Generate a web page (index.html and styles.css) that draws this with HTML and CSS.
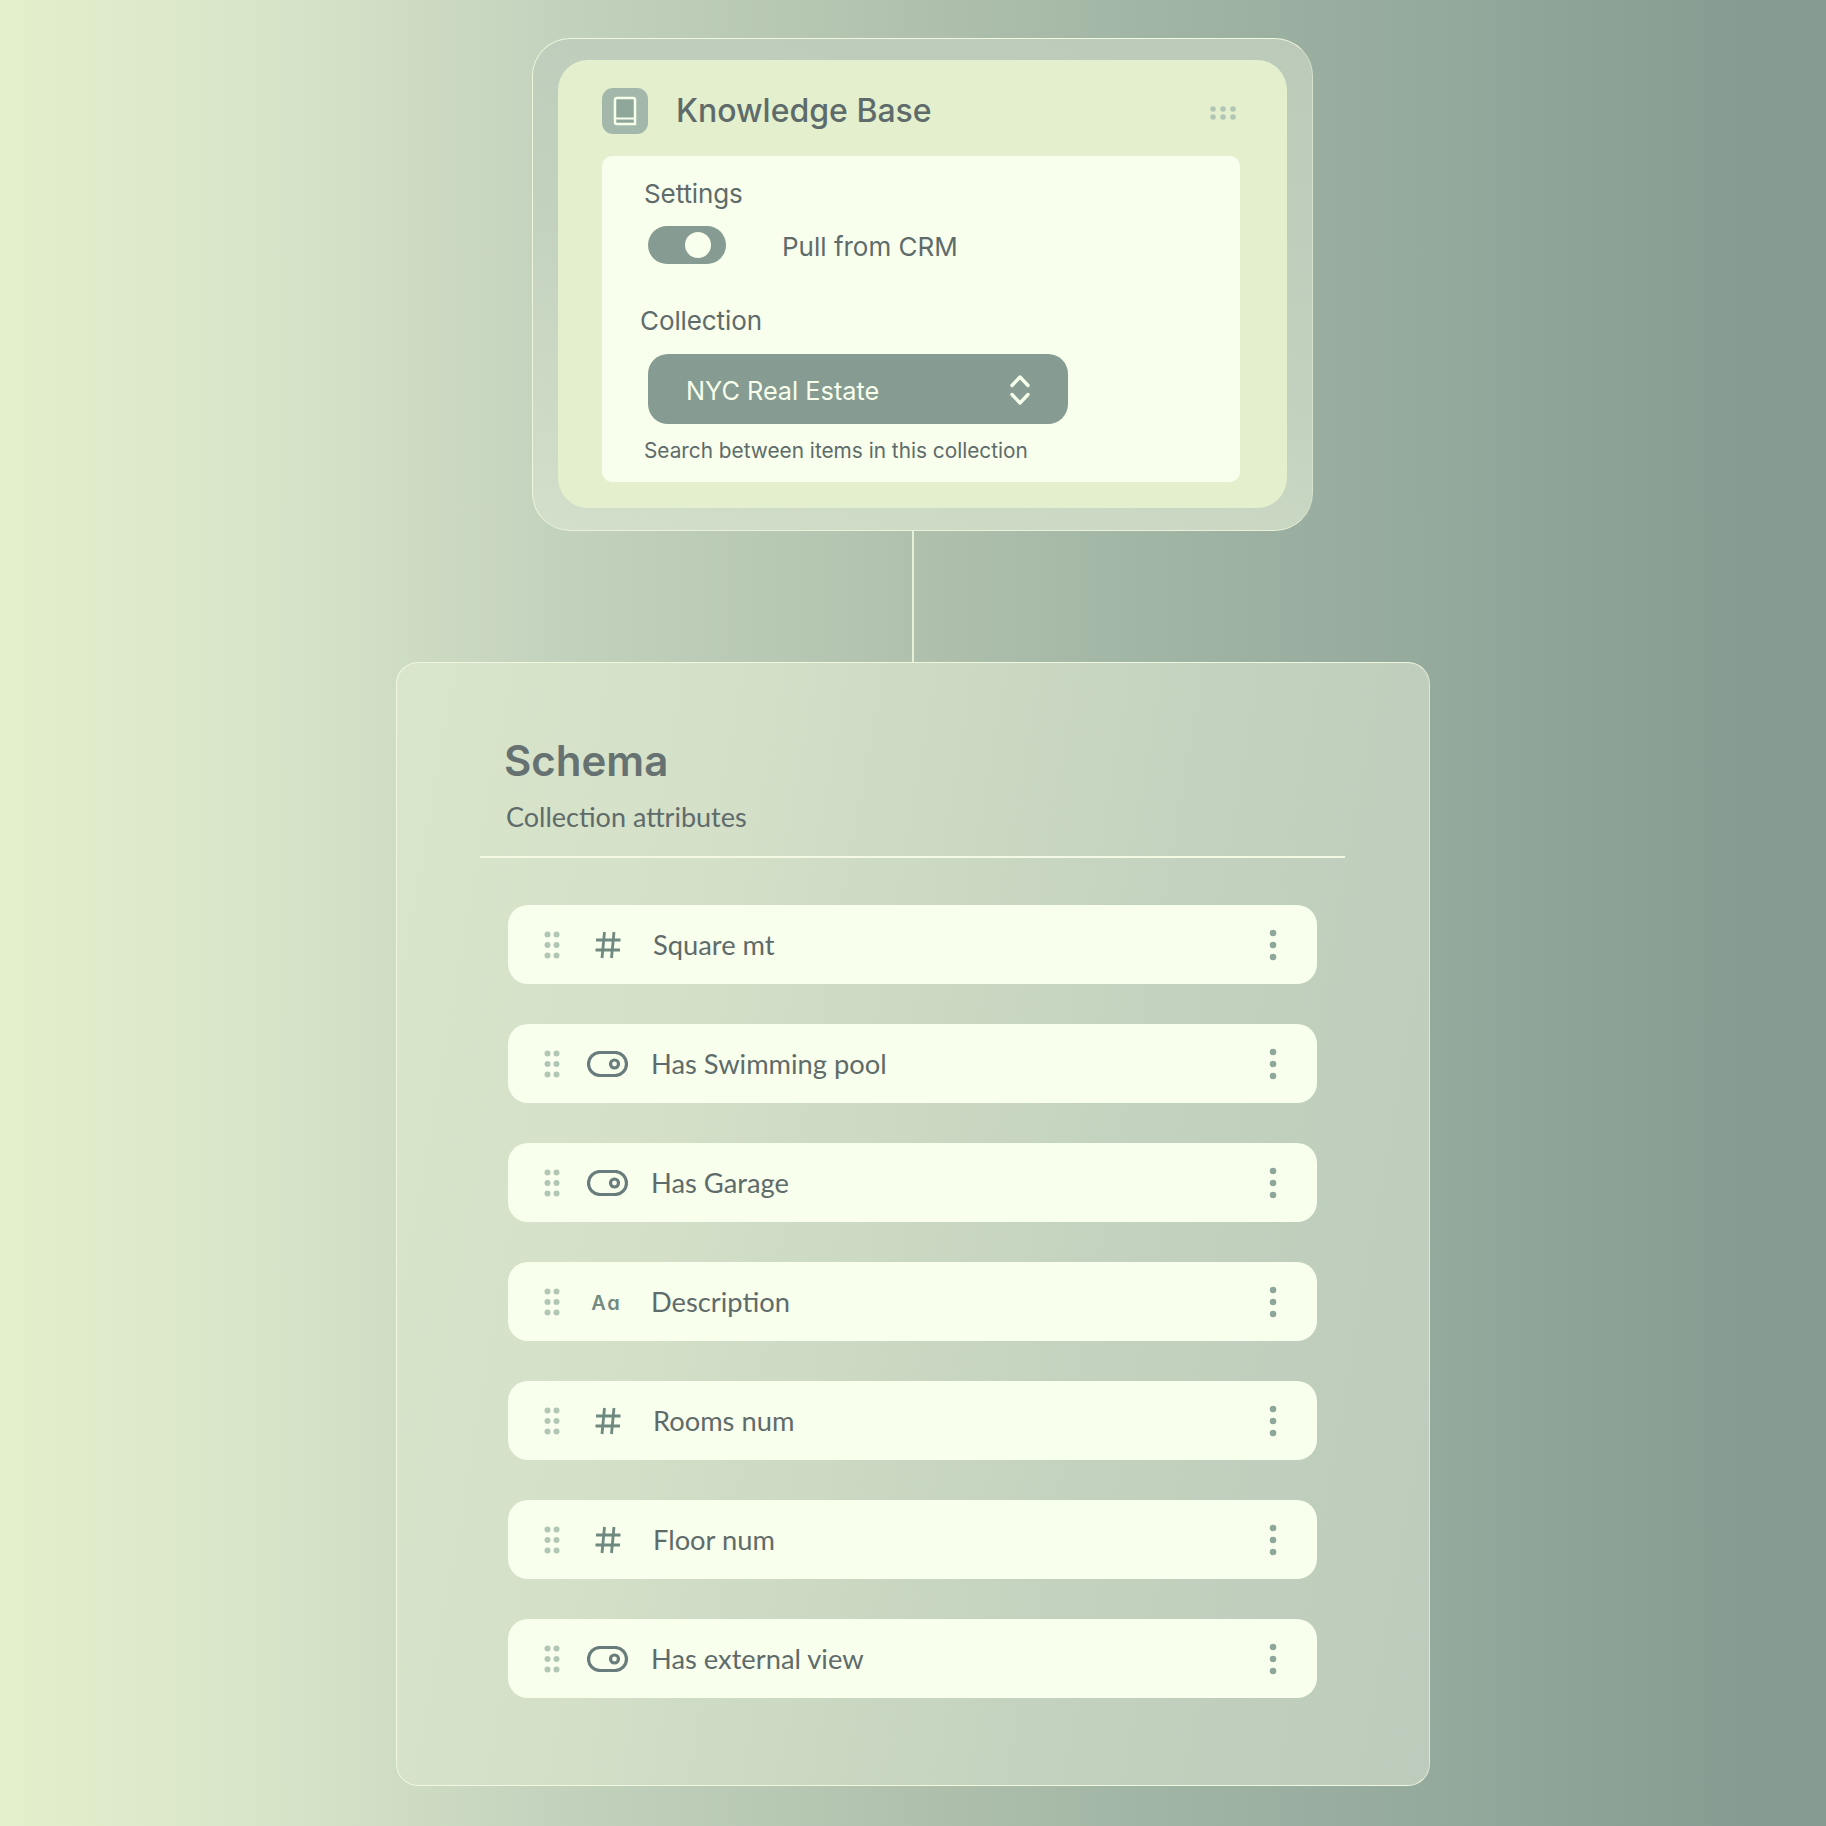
FILE: index.html
```html
<!DOCTYPE html>
<html lang="en">
<head>
    <meta charset="UTF-8">
    <title>Knowledge Base</title>
    <link rel="stylesheet" href="styles.css">
</head>
<body>
    <svg class="defs" width="0" height="0">
        <symbol id="hash" viewBox="0 0 26 28">
            <path d="M9.500 1 7 27M19 1l-2.500 26M1 9h24.500M.5 19h24.500" fill="none" stroke="#6f8880" stroke-width="2.800"/>
        </symbol>
        <symbol id="switch" viewBox="0 0 41 26">
            <rect x="1.500" y="1.500" width="38" height="23" rx="11.500" fill="none" stroke="#697c7c" stroke-width="3.200"/>
            <circle cx="27.500" cy="13" r="4" fill="none" stroke="#697c7c" stroke-width="3.200"/>
        </symbol>
        <symbol id="grip" viewBox="0 0 16 28">
            <g fill="#b2c6b5">
                <circle cx="3.500" cy="3.500" r="3"/><circle cx="12.500" cy="3.500" r="3"/>
                <circle cx="3.500" cy="14" r="3"/><circle cx="12.500" cy="14" r="3"/>
                <circle cx="3.500" cy="24.500" r="3"/><circle cx="12.500" cy="24.500" r="3"/>
            </g>
        </symbol>
        <symbol id="more" viewBox="0 0 8 32">
            <g fill="#8fa79b">
                <circle cx="4" cy="4" r="3.300"/><circle cx="4" cy="16" r="3.300"/><circle cx="4" cy="28" r="3.300"/>
            </g>
        </symbol>
    </svg>

    <main class="stack">
        <section class="node">
            <div class="node-inner">
                <header class="node-head">
                    <span class="book">
                        <svg width="24" height="30" viewBox="0 0 24 30">
                            <path d="M4 2h16a2 2 0 0 1 2 2v24H4a2 2 0 0 1-2-2V4a2 2 0 0 1 2-2z" fill="#8fa69a" stroke="#f6ffea" stroke-width="2.500"/>
                            <path d="M2 22.500h20" stroke="#f6ffea" stroke-width="2"/>
                        </svg>
                    </span>
                    <h1 class="node-title">Knowledge Base</h1>
                    <svg class="node-dots" width="26" height="14" viewBox="0 0 26 14">
                        <g fill="#b2c6b5">
                            <circle cx="3" cy="3" r="2.800"/><circle cx="13" cy="3" r="2.800"/><circle cx="23" cy="3" r="2.800"/>
                            <circle cx="3" cy="11" r="2.800"/><circle cx="13" cy="11" r="2.800"/><circle cx="23" cy="11" r="2.800"/>
                        </g>
                    </svg>
                </header>
                <div class="settings">
                    <div class="label">Settings</div>
                    <div class="toggle-row">
                        <span class="toggle"><span class="knob"></span></span>
                        <span class="toggle-text">Pull from CRM</span>
                    </div>
                    <div class="label label-collection">Collection</div>
                    <div class="select">
                        <span>NYC Real Estate</span>
                        <svg width="22" height="32" viewBox="0 0 22 32">
                            <path d="M3 11.500 11 3l8 8.500M3 20.500l8 8.500 8-8.500" fill="none" stroke="#f6ffea" stroke-width="3.400" stroke-linecap="round" stroke-linejoin="round"/>
                        </svg>
                    </div>
                    <div class="hint">Search between items in this collection</div>
                </div>
            </div>
        </section>

        <div class="connector"></div>

        <section class="schema">
            <h2 class="schema-title">Schema</h2>
            <p class="schema-sub">Collection attributes</p>
            <hr class="rule">
            <ul class="rows">
                <li class="row">
                    <svg class="grip"><use href="#grip"/></svg>
                    <span class="type"><svg class="ic-hash"><use href="#hash"/></svg></span>
                    <span class="name name-num">Square mt</span>
                    <svg class="more"><use href="#more"/></svg>
                </li>
                <li class="row">
                    <svg class="grip"><use href="#grip"/></svg>
                    <span class="type"><svg class="ic-switch"><use href="#switch"/></svg></span>
                    <span class="name">Has Swimming pool</span>
                    <svg class="more"><use href="#more"/></svg>
                </li>
                <li class="row">
                    <svg class="grip"><use href="#grip"/></svg>
                    <span class="type"><svg class="ic-switch"><use href="#switch"/></svg></span>
                    <span class="name">Has Garage</span>
                    <svg class="more"><use href="#more"/></svg>
                </li>
                <li class="row">
                    <svg class="grip"><use href="#grip"/></svg>
                    <span class="type"><span class="ic-text">Aa</span></span>
                    <span class="name">Description</span>
                    <svg class="more"><use href="#more"/></svg>
                </li>
                <li class="row">
                    <svg class="grip"><use href="#grip"/></svg>
                    <span class="type"><svg class="ic-hash"><use href="#hash"/></svg></span>
                    <span class="name name-num">Rooms num</span>
                    <svg class="more"><use href="#more"/></svg>
                </li>
                <li class="row">
                    <svg class="grip"><use href="#grip"/></svg>
                    <span class="type"><svg class="ic-hash"><use href="#hash"/></svg></span>
                    <span class="name name-num">Floor num</span>
                    <svg class="more"><use href="#more"/></svg>
                </li>
                <li class="row">
                    <svg class="grip"><use href="#grip"/></svg>
                    <span class="type"><svg class="ic-switch"><use href="#switch"/></svg></span>
                    <span class="name">Has external view</span>
                    <svg class="more"><use href="#more"/></svg>
                </li>
            </ul>
        </section>
    </main>
</body>
</html>
```

FILE: styles.css
```css
* {
    box-sizing: border-box;
}

html, body {
    height: 100%;
}

body {
    margin: 0;
    overflow: hidden;
    font-family: Inter, sans-serif;
    color: #5f6b6b;
    background: linear-gradient(90deg, #e4f0cc 0, #e2eecb 40px, #d6e3c8 300px, #c3d2bd 560px, #adbfab 960px, #a1b5a5 1150px, #93a99c 1450px, #869b91 1760px, #869b91 100%);
}

.defs {
    position: absolute;
}

.stack {
    width: 1034px;
    margin: 38px 0 0 396px;
}

/* top card */
.node {
    width: 781px;
    height: 493px;
    margin-left: 136px;
    padding: 21px 25px;
    border: 1px solid;
    border-color: #f0f7df #d6e2cb #e9f2d9 #edf5dc;
    border-radius: 38px;
    background: linear-gradient(15deg, #d3dfca 0, #c3d2bf 45%, #bbcab9 100%);
}

.node-inner {
    height: 448px;
    padding: 28px 47px 0 44px;
    border-radius: 30px;
    background: #e3efcd;
}

.node-head {
    display: flex;
    align-items: center;
    height: 46px;
}

.book {
    display: flex;
    align-items: center;
    justify-content: center;
    width: 46px;
    height: 46px;
    border-radius: 11px;
    background: #a3b8aa;
}

.node-title {
    margin: 0 0 0 28px;
    font-size: 32px;
    line-height: 44px;
    font-weight: 500;
}

.node-dots {
    margin-left: auto;
    margin-top: 4px;
    margin-right: 4px;
}

.settings {
    height: 326px;
    margin-top: 22px;
    padding: 22px 46px 0 42px;
    border-radius: 10px;
    background: #f8ffec;
}

.label {
    font-size: 26px;
    line-height: 32px;
    letter-spacing: -0.1px;
}

.toggle-row {
    display: flex;
    align-items: center;
    margin: 16px 0 0 4px;
}

.toggle {
    display: flex;
    align-items: center;
    justify-content: flex-end;
    width: 78px;
    height: 38px;
    padding-right: 15px;
    border-radius: 19px;
    background: #869b91;
}

.knob {
    width: 26px;
    height: 26px;
    border-radius: 50%;
    background: #f8ffec;
}

.toggle-text {
    margin-left: 56px;
    margin-top: 2px;
    font-size: 26px;
}

.label-collection {
    margin: 41px 0 0 -4px;
}

.select {
    display: flex;
    align-items: center;
    justify-content: space-between;
    width: 420px;
    height: 70px;
    margin: 17px 0 0 4px;
    padding: 2px 37px 0 38px;
    border-radius: 20px;
    font-size: 25.300px;
    color: #f8ffec;
    background: #869b91;
}

.hint {
    margin-top: 12px;
    font-size: 20.800px;
    line-height: 30px;
}

/* line between cards */
.connector {
    width: 2px;
    height: 131px;
    margin-left: 516px;
    background: #e6f0d6;
}

/* schema panel */
.schema {
    height: 1124px;
    padding: 72px 84px 0 83px;
    border: 1px solid;
    border-color: #f0f7df #dfe9d2 #f2f8e0 #f0f7df;
    border-radius: 22px;
    background: linear-gradient(100deg, #dae6cb 0, #d3dfc7 30%, #c4d3bf 65%, #bccbbb 100%);
}

.schema-title {
    margin: 0 0 0 24px;
    font-size: 42px;
    line-height: 52px;
    font-weight: 600;
    color: #667171;
}

.schema-sub {
    margin: 14px 0 0 26px;
    font-family: Lato, sans-serif;
    font-size: 27px;
    line-height: 32px;
}

.rule {
    height: 2px;
    margin: 23px 0 0;
    border: 0;
    background: #f3f9e3;
}

.rows {
    margin: 47px 0 0;
    padding: 0;
    list-style: none;
}

.row {
    display: flex;
    align-items: center;
    width: 809px;
    height: 79px;
    margin-left: 28px;
    margin-bottom: 40px;
    padding: 0 40px 0 36px;
    border-radius: 20px;
    background: #f8ffec;
}

.grip {
    width: 16px;
    height: 28px;
    margin-right: 27px;
}

.type {
    display: flex;
    justify-content: center;
    width: 41px;
    margin-right: 23px;
}

.ic-hash {
    width: 26px;
    height: 28px;
}

.ic-switch {
    width: 41px;
    height: 26px;
}

.ic-text {
    margin: 2px 2px 0 0;
    font-size: 20px;
    font-weight: 600;
    letter-spacing: 2px;
    font-feature-settings: "cv11";
    color: #728a80;
}

.name {
    font-family: Lato, sans-serif;
    font-size: 27.300px;
}

.name-num {
    margin-left: 2px;
}

.more {
    width: 8px;
    height: 32px;
    margin-left: auto;
}
```
